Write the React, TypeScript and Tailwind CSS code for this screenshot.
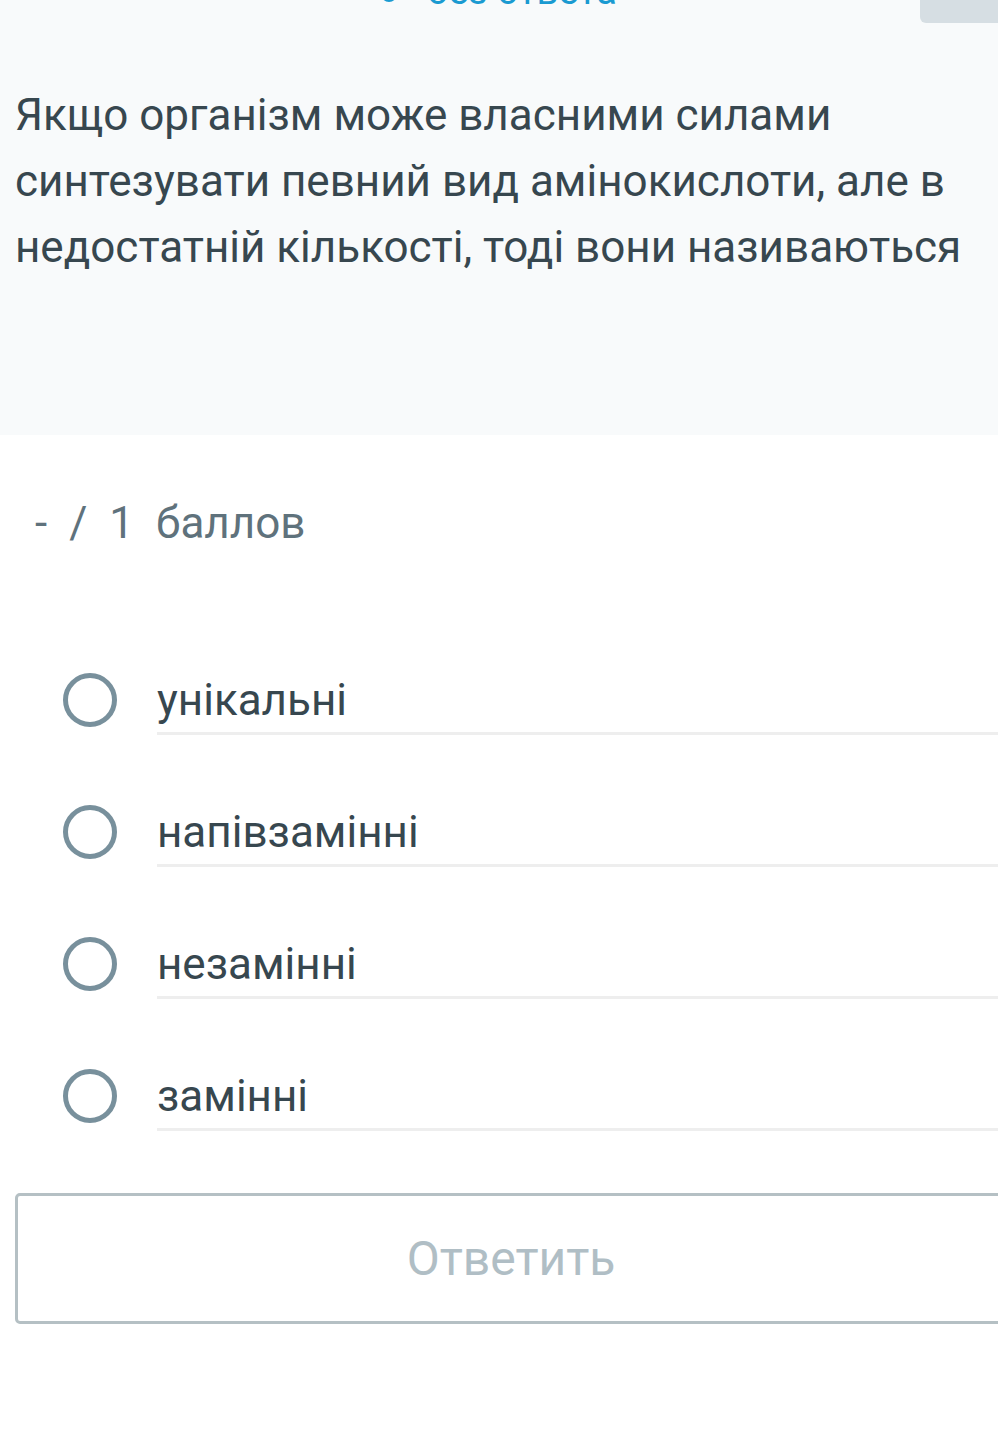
import React from 'react';

const OPTIONS = ['унікальні', 'напівзамінні', 'незамінні', 'замінні'];

const Radio: React.FC = () => (
  <div className="w-[54px] h-[54px] rounded-full border-[5px] border-[#78909c] shrink-0" />
);

const App: React.FC = () => {
  return (
    <div className="w-[998px] h-[1440px] overflow-hidden bg-white font-['Roboto','Noto_Sans',sans-serif]">
      {/* question block */}
      <section className="bg-[#f8fafb] h-[435px] overflow-hidden">
        <div className="flex h-[24px]">
          <div className="flex-1 flex justify-center items-end pl-[78px]">
            <div className="flex items-center gap-[30px] h-[46px] mb-[10px] text-[38px] leading-[46px] text-[#1a9ad1]">
              <span className="w-[16px] h-[16px] mt-[6px] rounded-full bg-[#1a9ad1]" />
              <span>без ответа</span>
            </div>
          </div>
          <div className="w-[78px] h-[23px] bg-[#d6dee3] rounded-bl-[6px]" />
        </div>
        <p className="px-[15px] pt-[58px] text-[44px] leading-[66px] text-[#37474f]">
          Якщо організм може власними силами синтезувати певний вид амінокислоти, але в недостатній кількості, тоді вони називаються
        </p>
      </section>

      {/* score */}
      <div className="pl-[35px] pt-[62px] h-[168px] text-[44px] leading-[52px] text-[#5f727c] flex gap-[22px]">
        <span>-</span>
        <span>/</span>
        <span>1</span>
        <span>баллов</span>
      </div>

      {/* options */}
      <div className="flex flex-col">
        {OPTIONS.map(opt => (
          <div key={opt} className="flex items-start pt-[71px] first:pt-[71px]">
            <div className="w-[157px] h-[52px] pl-[63px] flex items-center shrink-0">
              <Radio />
            </div>
            <div className="flex-1 pb-[6px] border-b-[3px] border-[#eeeeee]">
              <span className="block text-[44px] leading-[52px] text-[#37474f]">{opt}</span>
            </div>
          </div>
        ))}
      </div>

      {/* submit */}
      <div className="pl-[15px] pt-[62px]">
        <button className="w-[992px] h-[131px] border-[3px] border-[#b5c0c4] rounded-[5px] bg-white text-[48px] text-[#b0bec5]">
          Ответить
        </button>
      </div>
    </div>
  );
};

export default App;
